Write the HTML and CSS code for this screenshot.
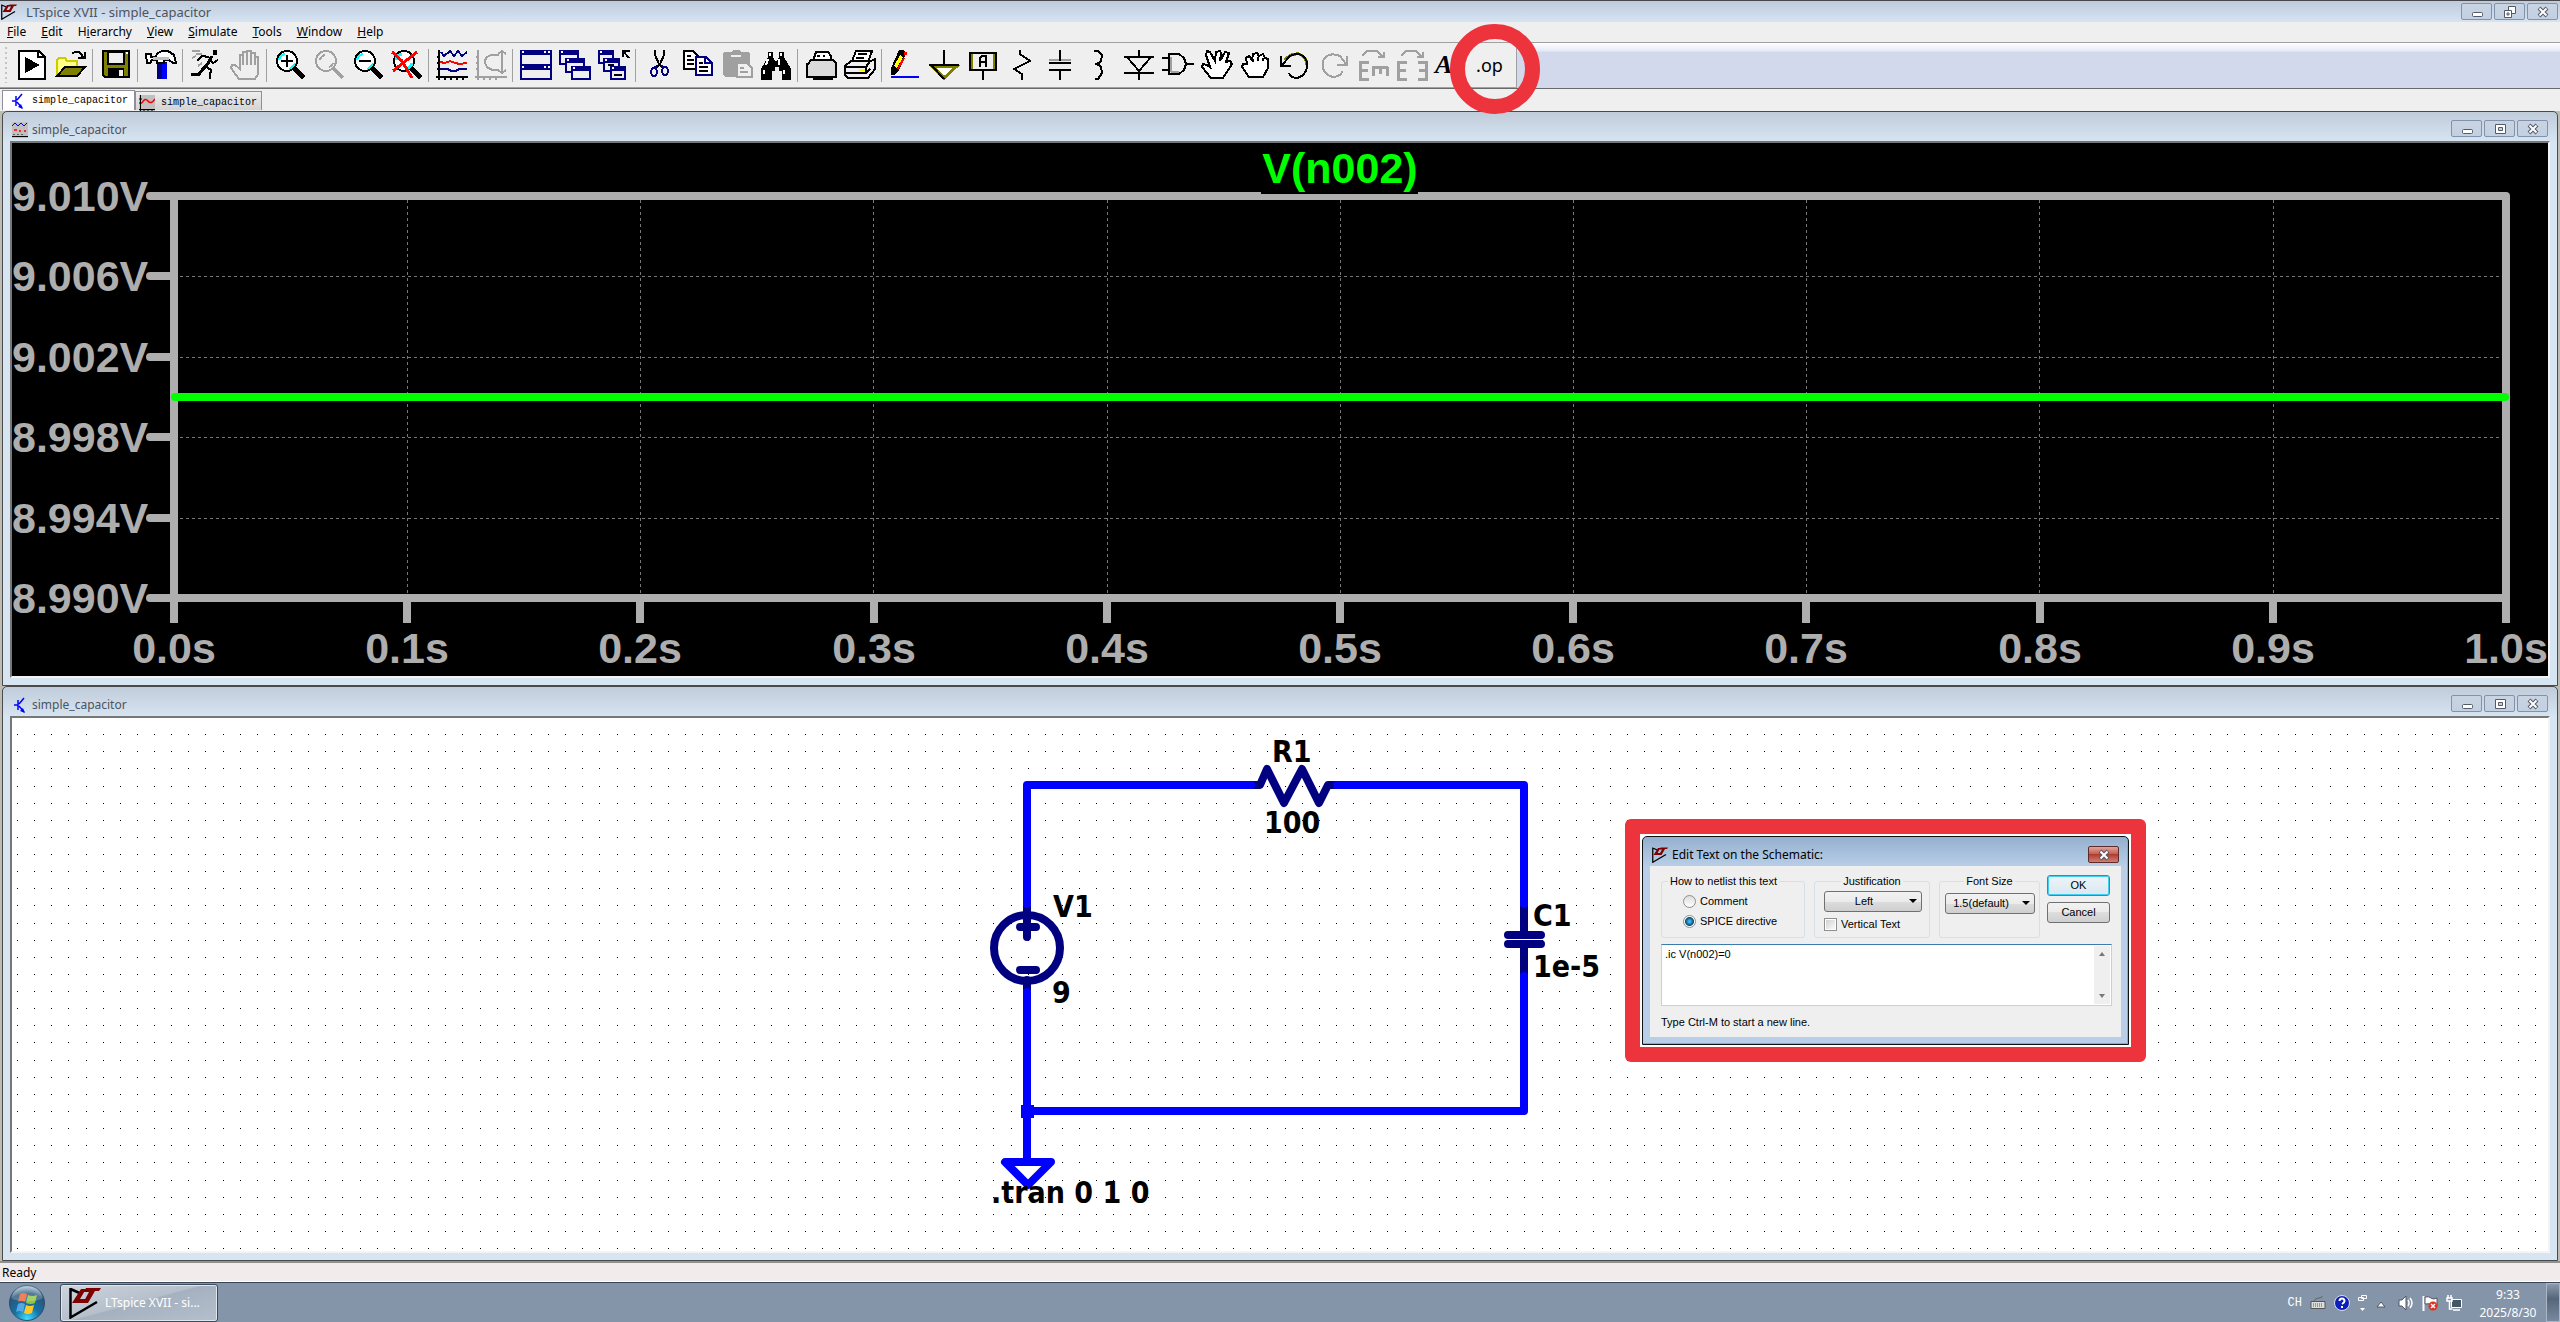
FILE: index.html
```html
<!DOCTYPE html>
<html lang="en">
<head>
<meta charset="utf-8">
<title>LTspice XVII - simple_capacitor</title>
<link rel="stylesheet" href="styles.css">
</head>
<body>
<svg class="defs" aria-hidden="true">
  <symbol id="logo" viewBox="0 0 32 32">
    <path d="M1.500 1v29.500L28 15M1.500 2l9 4" fill="none" stroke="#000" stroke-width="2.500"/>
    <path d="M12 2h5l-6 10h8l-2 4H3zM17 1h15l-2 3h-4l-7 12h-5l6-11h-5z" fill="#800000"/>
  </symbol>
  <symbol id="transistor" viewBox="0 0 16 16">
    <path d="M2 8h4M6 3v10M7 7l5-6M7 9l5 6" fill="none" stroke="#00f" stroke-width="1.500"/>
    <path d="M13 16l-5-2 3-3z" fill="#00f"/>
  </symbol>
  <symbol id="wave" viewBox="0 0 16 16">
    <path fill="#c0c0c0" d="M0 0h16v16H0z"/>
    <path d="M0 4l3-3 3 3 3-3 3 3 3-3" fill="none" stroke="#00f"/>
    <path d="M2 8h3M7 9h2M12 9h2" stroke="#f00" stroke-width="1.500"/>
    <path d="M0 14.500h16M2 12v1M6 12v1M10 12v1" stroke="#000"/>
  </symbol>
  <symbol id="min" viewBox="0 0 12 12"><rect x="1.500" y="6.500" width="10" height="4" rx="1" fill="#fff" stroke="#555a68"/></symbol>
  <symbol id="max" viewBox="0 0 12 12"><path d="M1.500 1.500h10v9h-10zM4.500 4.500h4v3h-4z" fill="#fff" stroke="#555a68" fill-rule="evenodd"/></symbol>
  <symbol id="restore" viewBox="0 0 12 12"><path d="M4.500.500h7v7h-7z" fill="#fff" stroke="#555a68"/><path d="M.500 4.500h7v7h-7zM3 7h2v2H3z" fill="#fff" stroke="#555a68"/></symbol>
  <symbol id="close" viewBox="0 0 12 12"><path d="M2 2l8 8M10 2l-8 8" stroke="#555a68" stroke-width="4"/><path d="M2.500 2.500l7 7M9.500 2.500l-7 7" stroke="#fff" stroke-width="2"/></symbol>
</svg>

<header class="titlebar">
  <svg class="icon16"><use href="#logo"/></svg>
  <h1>LTspice XVII - simple_capacitor</h1>
  <div class="controls">
    <button aria-label="Minimize"><svg><use href="#min"/></svg></button>
    <button aria-label="Restore"><svg><use href="#restore"/></svg></button>
    <button aria-label="Close"><svg><use href="#close"/></svg></button>
  </div>
</header>

<nav class="menu">
  <button><u>F</u>ile</button><button><u>E</u>dit</button><button>H<u>i</u>erarchy</button><button><u>V</u>iew</button><button><u>S</u>imulate</button><button><u>T</u>ools</button><button><u>W</u>indow</button><button><u>H</u>elp</button>
</nav>

<div class="toolbar">
  <div class="tools">
    <span class="grip"></span>
    <button aria-label="Run file"><svg viewBox="0 0 32 32"><path d="M3 2h20l6 6v22H3z" fill="#fff" stroke="#000" stroke-width="2"/><path d="M22 2v6h6" fill="none" stroke="#000" stroke-width="2"/><path d="M9 8l15 8-15 8z"/></svg></button>
    <button aria-label="Open"><svg viewBox="0 0 32 32"><path d="M2 26V11l2-2h6l2 3h10v6" fill="#ff8" stroke="#cc0" stroke-width="2"/><path d="M2 27l8-9h20l-8 9z" fill="#808000" stroke="#000" stroke-width="2"/><path d="M17 5q5-5 9 0l2 3M30 3v6h-7" fill="none" stroke="#000" stroke-width="2"/></svg></button>
    <i class="sep"></i>
    <button aria-label="Save"><svg viewBox="0 0 32 32"><path d="M3 2h26v26H5l-2-2z" fill="#808000" stroke="#000" stroke-width="2"/><path d="M8 3h16v12H8z" fill="#efefef" stroke="#000" stroke-width="2"/><path d="M8 19h16v10H8z"/><path d="M19 21h4v6h-4z" fill="#efefef"/><path d="M26 3h2v2h-2z" fill="#fff"/></svg></button>
    <i class="sep"></i>
    <button aria-label="Control panel"><svg viewBox="0 0 32 32"><path d="M12 13h10v17H12z" fill="#000080"/><path d="M17 14h5v16h-5z" fill="#00f"/><path d="M1 5h5v3h4l3-4 4-2h6l6 4 2 8h-3l-4-3h-5v3h-7v-3H7l-2 3H2z" fill="#fff" stroke="#000" stroke-width="2"/><path d="M8 9h16" stroke="#c0c0c0" stroke-width="3"/></svg></button>
    <i class="sep"></i>
    <button aria-label="Run"><svg viewBox="0 0 32 32"><path d="M23 1h4v5h-4z"/><path d="M22 7l-5 9-4 4-4 5H1" fill="none" stroke="#000" stroke-width="3"/><path d="M19 8l-7-1-5 5M20 10l3 4 5-3M15 17l6 4-1 5v4" fill="none" stroke="#000" stroke-width="2"/><path d="M2 2h8M6 5h6M2 9l4-2M12 14l-4 3" stroke="#a0a0a0" stroke-width="2"/></svg></button>
    <button aria-label="Halt"><svg viewBox="0 0 32 32"><path d="M10 30l-8-11 1-3h3l5 4V6h3v10V3h4v13V2h4v14V4h4v12-8h3v17l-3 5z" fill="none" stroke="#a0a0a0" stroke-width="2"/></svg></button>
    <i class="sep"></i>
    <button aria-label="Zoom in"><svg viewBox="0 0 32 32"><path d="M21 20l9 9" stroke="#000" stroke-width="5"/><circle cx="13" cy="12" r="10" fill="#fff" stroke="#000" stroke-width="2"/><path d="M5 11q1-5 6-6M15 20q5-2 6-6" fill="none" stroke="#0ff" stroke-width="2"/><path d="M7 12h12M13 6v12" stroke="#000" stroke-width="2"/></svg></button>
    <button aria-label="Pan"><svg viewBox="0 0 32 32"><path d="M21 20l9 9" stroke="#a0a0a0" stroke-width="4"/><circle cx="13" cy="12" r="10" fill="none" stroke="#a0a0a0" stroke-width="2"/><path d="M7 11q1-4 5-5M16 18q3-1 4-4" fill="none" stroke="#a0a0a0" stroke-width="2"/></svg></button>
    <button aria-label="Zoom out"><svg viewBox="0 0 32 32"><path d="M21 20l9 9" stroke="#000" stroke-width="5"/><circle cx="13" cy="12" r="10" fill="#fff" stroke="#000" stroke-width="2"/><path d="M5 11q1-5 6-6M15 20q5-2 6-6" fill="none" stroke="#0ff" stroke-width="2"/><path d="M7 12h12" stroke="#000" stroke-width="2"/></svg></button>
    <button aria-label="Zoom full extents"><svg viewBox="0 0 32 32"><path d="M21 20l9 9" stroke="#000" stroke-width="5"/><circle cx="13" cy="12" r="10" fill="#fff" stroke="#000" stroke-width="2"/><path d="M5 11q1-5 6-6M15 20q5-2 6-6" fill="none" stroke="#0ff" stroke-width="3"/><path d="M1 3l10 9 10 17M26 3L12 14 2 22" fill="none" stroke="#f00" stroke-width="3"/></svg></button>
    <i class="sep"></i>
    <button aria-label="Autorange"><svg viewBox="0 0 32 32"><path d="M3 1v30M0 28h32M1 8h3M1 14h3M1 20h3M9 28v3M15 28v3M21 28v3M27 28v3" stroke="#000" stroke-width="2"/><path d="M5 3l3 4 6-5 4 5 4-5 4 5 5-4" fill="none" stroke="#000080" stroke-width="2"/><path d="M4 13l5 1 5-2 5 2 5 1 7-1" fill="none" stroke="#f00" stroke-width="2"/><path d="M4 20h8l3 2h5l3-2h8" fill="none" stroke="#000080" stroke-width="2"/></svg></button>
    <button aria-label="Setup plot"><svg viewBox="0 0 32 32"><path d="M3 1v30M0 28h32M1 8h3M1 14h3M1 20h3M9 28v3M15 28v3M21 28v3M27 3v20M23 5l4-3 4 3M23 21l4 3 4-3" fill="none" stroke="#a0a0a0" stroke-width="2"/><path d="M24 6q-13-2-14 7 1 9 14 8" fill="none" stroke="#a0a0a0" stroke-width="2"/></svg></button>
    <i class="sep"></i>
    <button aria-label="Tile windows"><svg viewBox="0 0 32 32"><path d="M1 2h30v28H1z" fill="#efefef" stroke="#000080" stroke-width="2"/><path d="M0 1h32v5H0zM0 15h32v6H0z" fill="#000080"/><path d="M2 3h2M24 3h2M28 3h2M2 18h2M24 18h2M28 18h2" stroke="#fff" stroke-width="2"/></svg></button>
    <button aria-label="Cascade windows"><svg viewBox="0 0 32 32"><g fill="#efefef" stroke="#000080" stroke-width="2"><path d="M1 2h18v13H1z"/><path d="M7 10h18v13H7z"/><path d="M13 18h18v12H13z"/></g><path d="M0 1h20v5H0zM6 9h20v5H6zM12 17h20v5H12z" fill="#000080"/><path d="M2 3h2M8 11h2M14 19h2" stroke="#fff" stroke-width="2"/></svg></button>
    <button aria-label="Close windows"><svg viewBox="0 0 32 32"><g fill="#efefef" stroke="#000080" stroke-width="2"><path d="M1 2h14v12H1z"/><path d="M6 10h15v12H6z"/><path d="M13 18h14v12H13z"/></g><path d="M0 1h16v5H0zM5 9h17v5H5zM12 17h16v5H12z" fill="#000080"/><path d="M2 3h2M7 11h2M14 19h2" stroke="#fff" stroke-width="2"/><path d="M10 16h6M16 26h8M25 8V2h7M25 2l6 7" fill="none" stroke="#000" stroke-width="2"/></svg></button>
    <i class="sep"></i>
    <button aria-label="Cut"><svg viewBox="0 0 32 32"><path d="M12 1v5l4 9 4 4M21 1v5l-4 9-4 4" fill="none" stroke="#000" stroke-width="2"/><path d="M14 17l-3 2M18 17l4 1" stroke="#000080" stroke-width="2"/><ellipse cx="11" cy="23" rx="3" ry="4" fill="none" stroke="#000080" stroke-width="2"/><ellipse cx="22" cy="22" rx="3" ry="4" fill="none" stroke="#000080" stroke-width="2"/></svg></button>
    <button aria-label="Copy"><svg viewBox="0 0 32 32"><path d="M2 2h9l5 5v13H2z" fill="#fff" stroke="#000" stroke-width="2"/><path d="M5 7h4M5 11h7M5 15h7" stroke="#000" stroke-width="2"/><path d="M14 8h10l6 6v12H14z" fill="#fff" stroke="#000080" stroke-width="2"/><path d="M23 8v6h6" fill="none" stroke="#000080" stroke-width="2"/><path d="M17 14h4M17 18h9M17 22h9" stroke="#000" stroke-width="2"/></svg></button>
    <button aria-label="Paste"><svg viewBox="0 0 32 32"><path d="M3 3h7l2-2h6l2 2h7l2 2v13H18v10H4l-2-2V5z" fill="#a0a0a0"/><path d="M10 7h10" stroke="#efefef" stroke-width="2"/><path d="M16 14h10l5 5v9H16z" fill="#efefef" stroke="#a0a0a0" stroke-width="2"/><path d="M19 19h4M19 23h8" stroke="#a0a0a0" stroke-width="2"/></svg></button>
    <button aria-label="Find"><svg viewBox="0 0 32 32"><path d="M8 3h5v5l2 4h2l2-4V3h5v5l7 12v11h-9V22h-3v-4h-4v4h-3v9H1V20L8 8z"/><path d="M10 4v3M21 4v3M8 10l-2 6M19 10v6M4 21v4M24 21v4" stroke="#fff" stroke-width="2"/></svg></button>
    <i class="sep"></i>
    <button aria-label="Print preview"><svg viewBox="0 0 32 32"><path d="M8 12l3-9h12l3 4v5" fill="#fff" stroke="#000" stroke-width="2"/><path d="M3 15l3-4h22l3 3v14H2V15z" fill="#dadada" stroke="#000" stroke-width="2"/><path d="M8 28h20v3H8z"/><path d="M6 11h20M12 7h3M18 7h2" stroke="#000" stroke-width="2"/></svg></button>
    <button aria-label="Print"><svg viewBox="0 0 32 32"><path d="M8 12l4-10h16l-4 11" fill="#fff" stroke="#000" stroke-width="2"/><path d="M14 5h9M12 9h8" stroke="#000" stroke-width="2"/><path d="M1 17l6-5h20l4-2v10l-7 9H4l-3-3z" fill="#efefef" stroke="#000" stroke-width="2"/><path d="M1 18h21v7M2 24h20l4-4M26 12l-4 6" fill="none" stroke="#000" stroke-width="2"/><path d="M15 21h6" stroke="#ff0" stroke-width="2"/></svg></button>
    <i class="sep"></i>
    <button aria-label="Wire"><svg viewBox="0 0 32 32"><path d="M10 1h5l2 4-7 16-5 5H2v-7z"/><path d="M11 6l3 2-6 11-3-2z" fill="#ff0"/><path d="M15 9L9 20" stroke="#f00" stroke-width="2"/><path d="M15 3h3v3h-3z" fill="#f00"/><path d="M2 28h28" stroke="#00f" stroke-width="2"/></svg></button>
    <button aria-label="Ground"><svg viewBox="0 0 32 32"><path d="M16 1v14" stroke="#000" stroke-width="2"/><path d="M4 17h25L16 29z" fill="#fff" stroke="#808000" stroke-width="3"/><path d="M1 16h30M4 17l12 13" stroke="#000" stroke-width="2"/></svg></button>
    <button aria-label="Label net"><svg viewBox="0 0 32 32"><path d="M3 4h26v17H3z" fill="#efefef" stroke="#000" stroke-width="2"/><path d="M5 5v15M27 5v15" stroke="#808000" stroke-width="2"/><path d="M16 21v10M13 18V9l2-2h4v11M13 13h6" fill="none" stroke="#000" stroke-width="2"/></svg></button>
    <button aria-label="Resistor"><svg viewBox="0 0 32 32"><path d="M14 1v4l10 7L8 20l8 5v6" fill="none" stroke="#000" stroke-width="2"/></svg></button>
    <button aria-label="Capacitor"><svg viewBox="0 0 32 32"><path d="M4 11h22" stroke="#a0a0a0" stroke-width="2"/><path d="M15 1v11M4 14h22M4 21h22M15 21v10" stroke="#000" stroke-width="2"/></svg></button>
    <button aria-label="Inductor"><svg viewBox="0 0 32 32"><path d="M10 2h4l4 4-1 6-4 3 4 3 1 6-4 6h-3M11 15h5" fill="none" stroke="#000" stroke-width="2"/></svg></button>
    <button aria-label="Diode"><svg viewBox="0 0 32 32"><path d="M16 1v6M16 21v10M1 24h30" stroke="#000" stroke-width="2"/><path d="M4 8h24L16 22z" fill="#efefef" stroke="#000" stroke-width="2"/><path d="M1 8h30" stroke="#000" stroke-width="2"/></svg></button>
    <button aria-label="Component"><svg viewBox="0 0 32 32"><path d="M7 5h10l5 4 2 6-2 6-5 4H7z" fill="#efefef" stroke="#000" stroke-width="2"/><path d="M9 23h8M9 23V8" fill="none" stroke="#a0a0a0" stroke-width="2"/><path d="M0 9h7M0 21h7M24 15h8" stroke="#000" stroke-width="2"/></svg></button>
    <button aria-label="Move"><svg viewBox="0 0 32 32"><path d="M10 29l-9-11 1-3 4 1 3 2-4-12 1-4 3 1 5 9 1-9 4-1 1 2-1 8 5-9 4 1-3 9 4-1 2 3-9 14z" fill="#fff" stroke="#000" stroke-width="2"/></svg></button>
    <button aria-label="Drag"><svg viewBox="0 0 32 32"><path d="M9 28l-7-10 1-3h4l-1-6 3-2 3 4 1-6 4-1 2 3 4-2 2 4 3 1v9l-5 9z" fill="#fff" stroke="#000" stroke-width="2"/><path d="M13 10v3M18 8v4M23 9v3" stroke="#000" stroke-width="2"/></svg></button>
    <button aria-label="Undo"><svg viewBox="0 0 32 32"><path d="M6 11q6-7 14-6 8 3 8 11" fill="none" stroke="#808000" stroke-width="3"/><path d="M2 7v10h10M3 16l8-9q12-6 17 6 1 13-10 16-6 0-8-5" fill="none" stroke="#000" stroke-width="2"/></svg></button>
    <button aria-label="Redo"><svg viewBox="0 0 32 32"><path d="M29 7v9H19M28 15l-6-8Q10 2 5 12 3 25 15 28q9-1 9-6" fill="none" stroke="#a0a0a0" stroke-width="2"/></svg></button>
    <button aria-label="Rotate"><svg viewBox="0 0 32 32"><path d="M12 13H3v17h9M3 21h8M15 18h16M16 18v9M23 18v7M30 18v9" fill="none" stroke="#a0a0a0" stroke-width="3"/><path d="M5 7l5-5h10l6 6M27 3v5h-6" fill="none" stroke="#a0a0a0" stroke-width="2"/></svg></button>
    <button aria-label="Mirror"><svg viewBox="0 0 32 32"><path d="M11 13H2v17h9M2 21h8M22 13h8v17h-8M30 21h-7" fill="none" stroke="#a0a0a0" stroke-width="3"/><path d="M5 7l5-5h10l6 6M27 3v5h-6" fill="none" stroke="#a0a0a0" stroke-width="2"/></svg></button>
    <button class="glyph-a">A</button>
    <button class="glyph-op">.op</button>
    <span class="marker"></span>
  </div>
</div>

<div class="tabs">
  <button class="tab active"><svg class="icon16"><use href="#transistor"/></svg>simple_capacitor</button><button class="tab"><svg class="icon16" viewBox="0 0 16 16"><path fill="#c0c0c0" d="M0 0h16v16H0z"/><path d="M3 8q3-6 6-2t7-2" fill="none" stroke="#f00" stroke-width="1.500"/><path d="M1.500 0v16M0 14.500h16M0 4h3M0 8h3M5 14v2M9 14v2M13 14v2" stroke="#000"/></svg>simple_capacitor</button>
</div>

<main class="mdi">
  <section class="child">
    <div class="caption">
      <svg class="icon16"><use href="#wave"/></svg>
      <h2>simple_capacitor</h2>
      <div class="controls">
        <button aria-label="Minimize"><svg><use href="#min"/></svg></button>
        <button aria-label="Maximize"><svg><use href="#max"/></svg></button>
        <button aria-label="Close"><svg><use href="#close"/></svg></button>
      </div>
    </div>
    <div class="view plot">
      <svg viewBox="12 143 2536 533">
        <path class="plot-grid" d="M180 276.500H2502M180 357.500H2502M180 437.500H2502M180 518.500H2502M407.500 200V594M640.500 200V594M873.500 200V594M1107.500 200V594M1340.500 200V594M1573.500 200V594M1806.500 200V594M2039.500 200V594M2273.500 200V594"/>
        <path class="plot-axis" d="M150 196H2506M150 276h24M150 357h24M150 437h24M150 518h24M150 598H2506" stroke-linecap="round"/>
        <path class="plot-axis" d="M174 196V623M407 598v25M640 598v25M874 598v25M1107 598v25M1340 598v25M1573 598v25M1806 598v25M2040 598v25M2273 598v25M2506 196V623"/>
        <path class="trace" d="M175 397H2505"/>
        <rect x="1261" y="146" width="157" height="48"/>
        <g class="axis-y">
          <text x="12" y="211">9.010V</text><text x="12" y="291">9.006V</text><text x="12" y="372">9.002V</text><text x="12" y="452">8.998V</text><text x="12" y="533">8.994V</text><text x="12" y="613">8.990V</text>
        </g>
        <g class="axis-x">
          <text x="174" y="663">0.0s</text><text x="407" y="663">0.1s</text><text x="640" y="663">0.2s</text><text x="874" y="663">0.3s</text><text x="1107" y="663">0.4s</text><text x="1340" y="663">0.5s</text><text x="1573" y="663">0.6s</text><text x="1806" y="663">0.7s</text><text x="2040" y="663">0.8s</text><text x="2273" y="663">0.9s</text><text x="2506" y="663">1.0s</text>
        </g>
        <text class="trace-name" x="1340" y="183">V(n002)</text>
      </svg>
    </div>
  </section>

  <section class="child">
    <div class="caption">
      <svg class="icon16"><use href="#transistor"/></svg>
      <h2>simple_capacitor</h2>
      <div class="controls">
        <button aria-label="Minimize"><svg><use href="#min"/></svg></button>
        <button aria-label="Maximize"><svg><use href="#max"/></svg></button>
        <button aria-label="Close"><svg><use href="#close"/></svg></button>
      </div>
    </div>
    <div class="view schematic">
      <svg viewBox="12 718 2536 533">
        <path id="dots" class="dots"/>
        <path class="part" d="M1250 785h10l7-16 17 34 18-34 17 34 9-18h8M1027 906v31M1020 927h16M1020 970h16M1027 980v10M1524 906v29M1508 935h33M1508 944h33M1524 944v30"/>
        <circle class="part" cx="1027" cy="948" r="33"/>
        <path class="wire" d="M1027 904V785H1251M1337 785H1524V904M1524 976V1111H1027V992M1027 1111v51M1005 1162h46l-23 23z"/>
        <path fill="#00f" d="M1021 1105h13v13h-13z"/>
        <g class="net-text">
          <text x="1272" y="762">R1</text><text x="1264" y="833">100</text><text x="1053" y="917">V1</text><text x="1052" y="1003">9</text><text x="1533" y="926">C1</text><text x="1533" y="977">1e-5</text><text x="991" y="1203">.tran 0 1 0</text>
        </g>
      </svg>
      <div class="highlight">
        <form class="dialog">
          <div class="dialog-title">
            <svg class="icon16"><use href="#logo"/></svg>
            <h3>Edit Text on the Schematic:</h3>
            <button type="button" class="dialog-close" aria-label="Close"><svg><use href="#close"/></svg></button>
          </div>
          <div class="dialog-body">
            <div class="options">
              <fieldset class="netlist">
                <legend>How to netlist this text</legend>
                <label><input type="radio" name="kind">Comment</label>
                <label><input type="radio" name="kind" checked>SPICE directive</label>
              </fieldset>
              <fieldset class="justify">
                <legend>Justification</legend>
                <span class="drop"><select aria-label="Justification"><option>Left</option></select></span>
                <label><input type="checkbox">Vertical Text</label>
              </fieldset>
              <fieldset class="size">
                <legend>Font Size</legend>
                <span class="drop"><select aria-label="Font size"><option>1.5(default)</option></select></span>
              </fieldset>
              <div class="actions">
                <button type="button" class="ok">OK</button>
                <button type="button">Cancel</button>
              </div>
            </div>
            <div class="editor">
              <textarea aria-label="Text">.ic V(n002)=0</textarea>
              <span class="scroll"><i class="up"></i><i class="down"></i></span>
            </div>
            <p>Type Ctrl-M to start a new line.</p>
          </div>
        </form>
      </div>
    </div>
  </section>
</main>

<div class="status">Ready</div>

<footer class="taskbar">
  <button class="start" aria-label="Start"><svg viewBox="0 0 36 36">
    <defs><radialGradient id="orb" cx=".5" cy=".95" r=".9"><stop offset="0" stop-color="#3fe0ff"/><stop offset=".4" stop-color="#1473a8"/><stop offset=".8" stop-color="#2b5578"/><stop offset="1" stop-color="#9db9cc"/></radialGradient></defs>
    <circle cx="18" cy="18" r="17.500" fill="url(#orb)" stroke="#28506f"/>
    <path d="M11 9q3-2 7 0l-2 8q-4-2-7 0z" fill="#ee6030"/><path d="M19 10q4 2 9 0l-2 8q-4 2-9 0z" fill="#8cc63f"/><path d="M9 19q3-2 7 0l-2 8q-4-2-7 0z" fill="#52a8e8"/><path d="M17 20q4 2 8 0l-2 8q-4 2-8 0z" fill="#fcc828"/>
    <path d="M3 14a15 14 0 0 1 30 0q-15 5-30 0z" fill="#fff" opacity=".2"/>
  </svg></button>
  <button class="task"><svg><use href="#logo"/></svg>LTspice XVII - si...</button>
  <div class="tray">
    <span class="lang">CH</span>
    <svg viewBox="0 0 16 16"><path d="M1 6.500h14v7H1z" fill="#ddd" stroke="#555"/><path d="M3 9h10M3 11h10" stroke="#555" stroke-dasharray="1 1"/><path d="M4 6q1-3 5-3t3-2" fill="none" stroke="#666"/></svg>
    <svg viewBox="0 0 16 16"><circle cx="8" cy="8" r="7.500" fill="#0b1fb8" stroke="#dde"/><path d="M5.500 6q0-2.500 2.500-2.500T10.500 6q0 1.500-2.500 3M8 11v2" fill="none" stroke="#fff" stroke-width="2"/></svg>
    <svg class="langbar" viewBox="0 0 10 20"><path d="M3.500 2.500h5v3h-5zM.500 4.500h5v3h-5z" fill="#8494a9" stroke="#fff"/><path d="M2 15h5l-2.500 3z" fill="#fff"/></svg>
    <svg class="arrow" viewBox="0 0 10 12"><path d="M1 10l4-5 4 5z" fill="#fff" stroke="#556"/></svg>
    <svg viewBox="0 0 16 16"><path d="M1 5h3l4-4v14l-4-4H1z" fill="#fff" stroke="#556"/><path d="M10 5q2 3 0 6M12 3q4 5 0 10" fill="none" stroke="#fff" stroke-width="1.500"/></svg>
    <svg viewBox="0 0 16 16"><path d="M1.500 1v15" stroke="#fff" stroke-width="2"/><path d="M3 2q4-1 6 1t6 0v8q-5 1-6-1T3 9z" fill="#fff" stroke="#556"/><circle cx="11" cy="11" r="4.500" fill="#e03020"/><path d="M9 9l4 4M13 9l-4 4" stroke="#fff" stroke-width="1.500"/></svg>
    <svg viewBox="0 0 16 16"><path d="M5.500 4.500h10v8h-10z" fill="#445566" stroke="#fff"/><path d="M7 15h7M2 0v3M5 0v3M1 3h5v3H1zM3.500 6v8h3" fill="none" stroke="#fff" stroke-width="1.500"/></svg>
    <div class="clock"><time>9:33</time><time>2025/8/30</time></div>
    <button class="peek" aria-label="Show desktop"></button>
  </div>
</footer>
<script src="grid.js"></script>
</body>
</html>
```
FILE: styles.css
```css
* { box-sizing: border-box; }
body {
  margin: 0;
  min-height: 100vh;
  display: flex;
  flex-direction: column;
  background: #efefef;
  font: 12px/16px "Noto Sans", sans-serif;
  color: #000;
}
button { font: inherit; color: inherit; margin: 0; padding: 0; border: 0; background: none; }
h1, h2, h3, p { margin: 0; font-size: inherit; font-weight: normal; }
svg { display: block; flex: none; }
.defs { position: absolute; width: 0; height: 0; }
.icon16 { width: 16px; height: 16px; }

/* main window frame */
.titlebar {
  height: 22px;
  display: flex;
  align-items: center;
  gap: 9px;
  padding: 0 2px 0 1px;
  border-top: 1px solid #47484d;
  background: linear-gradient(#bfcbda, #d5e3f2);
  color: #4c545d;
}
.titlebar h1 { font-size: 13px; }
.controls { display: flex; gap: 2px; margin-left: auto; }
.controls button {
  width: 31px;
  height: 17px;
  display: grid;
  place-items: center;
  border: 1px solid #8192ac;
  border-radius: 2px;
  background: linear-gradient(#c8d4e2, #c3d0e1);
}
.controls svg, .dialog-close svg { width: 12px; height: 12px; }

.menu {
  height: 21px;
  display: flex;
  gap: 15px;
  padding-left: 7px;
  border-bottom: 1px solid #a0a0a0;
}

.toolbar {
  height: 46px;
  border-bottom: 1px solid #696969;
  background: linear-gradient(#fff, #e6eaf5 8px, #d3d9ed 9px);
}
.tools {
  position: relative;
  width: max-content;
  height: 45px;
  display: flex;
  align-items: center;
  padding-right: 7px;
  border-right: 1px solid #a0a0a0;
  border-bottom: 1px solid #a0a0a0;
  background: #efefef;
}
.tools button { width: 39px; height: 40px; display: grid; place-items: center; }
.tools svg { width: 32px; height: 32px; shape-rendering: crispEdges; }
.grip {
  width: 2px;
  height: 36px;
  margin: 0 5px;
  background: repeating-linear-gradient(#c4c4c4 0 2px, transparent 2px 5px);
}
.sep { width: 6px; height: 33px; background: linear-gradient(90deg, transparent 2px, #a0a0a0 2px 3px, transparent 3px); }
.tools .glyph-a { padding-left: 4px; justify-items: start; font: italic bold 26px/32px "Liberation Serif", serif; }
.tools .glyph-op { font: 18px/30px "Noto Sans", sans-serif; }
.marker {
  position: absolute;
  right: -24px;
  top: -19px;
  width: 90px;
  height: 90px;
  border: 15px solid #ed333b;
  border-radius: 50%;
}

.tabs { height: 22px; display: flex; align-items: flex-start; padding: 1px 2px; }
.tab {
  height: 19px;
  margin-top: 1px;
  padding: 3px 4px 0 3px;
  display: flex;
  align-items: center;
  gap: 6px;
  border: 1px solid #8e8f9a;
  border-bottom: 0;
  background: linear-gradient(#eee, #d4d4d4);
  font: 10px/16px "Liberation Mono", monospace;
}
.tab.active { height: 20px; margin-top: 0; padding: 1px 6px 0 7px; background: #fff; }

/* child windows */
.mdi { flex: 1; display: flex; flex-direction: column; padding: 0 2px; background: #bcbcb4; }
.child {
  flex: 1 1 0;
  display: flex;
  flex-direction: column;
  padding: 0 7px 7px;
  border: 1px solid #4a4a4a;
  border-radius: 5px 5px 0 0;
  background: linear-gradient(#c0ccda, #d7e4f2 30px);
}
.caption { height: 29px; display: flex; align-items: center; gap: 4px; padding: 7px 2px 0; color: #4c545d; }
.caption .controls { margin-top: -3px; }
.view {
  flex: 1;
  position: relative;
  border: 2px solid #e8ecf0;
  border-color: #777 #f4f4f4 #f4f4f4 #777;
}
.view > svg { width: 100%; height: auto; }
.plot { background: #000; }
.schematic { background: #fff; }

.plot text { font: bold 43px "Liberation Sans", sans-serif; fill: #aeaeae; }
.axis-x text, .plot .trace-name { text-anchor: middle; }
.plot .trace-name { fill: #0f0; }
.plot-axis { fill: none; stroke: #aeaeae; stroke-width: 8; }
.plot-grid { fill: none; stroke: #777; stroke-dasharray: 3 3; }
.trace { stroke: #0f0; stroke-width: 8; stroke-linecap: round; }

.dots { stroke: #000; shape-rendering: crispEdges; }
.wire, .part { fill: none; stroke-width: 8; stroke-linecap: round; stroke-linejoin: round; }
.wire { stroke: #00f; }
.part { stroke: #000080; }
.net-text { font: bold 30px "DejaVu Sans Condensed", "Noto Sans", sans-serif; }

/* text dialog, floating on the schematic */
.highlight {
  position: absolute;
  left: 1613px;
  top: 101px;
  width: 521px;
  border: 15px solid #ed333b;
  border-radius: 6px;
  background: #fff;
  padding: 2px;
}
.dialog {
  padding: 0 7px 7px;
  border: 1px solid #111;
  border-radius: 5px 5px 0 0;
  background: linear-gradient(#94b0ce, #b9cfe9 30px);
  box-shadow: inset -1px -1px #4cc4e0;
}
.dialog-title { height: 29px; display: flex; align-items: center; gap: 4px; padding: 6px 2px 0; }
.dialog-close {
  width: 31px;
  height: 17px;
  margin-left: auto;
  display: grid;
  place-items: center;
  border: 1px solid #5b2a2a;
  border-radius: 2px;
  background: linear-gradient(#e0a49c, #c4584c 50%, #b03c30 50%, #d08070);
}
.dialog-body {
  padding: 9px 9px 8px 11px;
  background: #efefef;
  font: 11px/13px "Liberation Sans", sans-serif;
}
.options { display: flex; align-items: flex-start; height: 69px; }
fieldset {
  height: 63px;
  margin: 0 9px 0 0;
  padding: 0;
  border: 1px solid #d5dfe5;
  border-radius: 3px;
  display: flex;
  flex-direction: column;
}
legend { padding: 0 2px; }
.justify legend, .size legend { margin: 0 auto; }
fieldset label { display: flex; align-items: center; gap: 4px; height: 20px; }
fieldset input { appearance: none; width: 13px; height: 13px; margin: 0; border: 1px solid #8e8f8f; background: #eee; }
fieldset input[type=radio] { border-radius: 50%; background: linear-gradient(#ddd, #fff); }
fieldset input[type=radio]:checked { background: radial-gradient(circle, #3cb4e8 1px, #0c4a78 4px, #fff 5px); }
fieldset input[type=checkbox] { background: linear-gradient(135deg, #ccc, #fff); box-shadow: inset 0 0 0 1px #fff; }
.netlist { width: 144px; padding-top: 3px; }
.netlist legend { margin-left: 6px; }
.netlist label { margin-left: 21px; }
.justify { width: 116px; }
.justify label { margin-left: 9px; height: 24px; }
.size { width: 101px; margin-right: 7px; }
.drop { position: relative; margin: 3px 7px 0 9px; }
.size .drop { margin: 5px 4px 0 5px; }
.drop::after {
  content: "";
  position: absolute;
  right: 5px;
  top: 8px;
  border: 4px solid transparent;
  border-top-color: #000;
  border-bottom: 0;
}
.drop select, .actions button {
  width: 100%;
  height: 21px;
  border: 1px solid #707070;
  border-radius: 3px;
  background: linear-gradient(#f2f2f2, #ebebeb 50%, #ddd 50%, #cfcfcf);
}
.drop select { display: block; appearance: none; margin: 0; padding: 0 18px 0 0; font: inherit; color: #000; text-align: center; text-align-last: center; }
.actions { width: 63px; display: flex; flex-direction: column; gap: 6px; }
.actions .ok { border-color: #2c8fb8; box-shadow: inset 0 0 0 1px #40d0f4; background: linear-gradient(#eef4f8, #d8e8f2); }
.editor { display: flex; height: 62px; border: 1px solid #b8d4e6; border-top-color: #3d7bad; background: #fff; padding: 1px; }
.editor textarea { flex: 1; margin: 0; padding: 2px; border: 0; resize: none; font: inherit; overflow: hidden; background: #fff; color: #000; }
.scroll { width: 16px; display: flex; flex-direction: column; justify-content: space-between; align-items: center; padding: 6px 0; background: #efefef; }
.scroll i { border: 3px solid transparent; }
.scroll .up { border-bottom: 4px solid #777; border-top: 0; }
.scroll .down { border-top: 4px solid #777; border-bottom: 0; }
.dialog-body p { margin: 10px 0 0; }

/* status bar and desktop taskbar */
.status {
  height: 21px;
  padding: 2px 2px 0;
  border-top: 2px solid #909090;
  border-bottom: 1px solid #fff;
  background: #f1eceb;
}
.taskbar {
  height: 40px;
  display: flex;
  align-items: center;
  border-top: 1px solid #35455a;
  background: #8494a9;
  color: #fff;
}
.start { width: 36px; margin: 0 15px 0 9px; }
.start svg { width: 36px; height: 36px; }
.task {
  width: 158px;
  height: 38px;
  display: flex;
  align-items: center;
  gap: 4px;
  padding-left: 8px;
  border: 1px solid #3d4a5c;
  border-radius: 3px;
  box-shadow: inset 0 0 0 1px #e0e6ee;
  background: linear-gradient(165deg, #cdd4dc, #b6c0cc 48%, #a5b1c0 50%, #b4bfcc);
}
.task svg { width: 32px; height: 32px; }
.tray { margin-left: auto; display: flex; align-items: center; gap: 8px; height: 100%; }
.tray svg { width: 16px; height: 16px; }
.tray .langbar { width: 10px; height: 20px; }
.tray .arrow { width: 10px; height: 12px; margin-right: 4px; }
.lang { font: 12px/16px "Liberation Mono", monospace; }
.clock { width: 76px; display: flex; flex-direction: column; padding-top: 2px; text-align: center; line-height: 18px; }
.tray .peek { width: 14px; height: 100%; margin-left: -8px; border: 1px solid #aab6c4; background: linear-gradient(#8a99ab, #56667a 40%, #7888a0); }
```
FILE: grid.js
```js
// Schematic grid: one-pixel dots on whole pixels, evenly pitched.
const pitch = 17.13;
let path = "";
for (let row = 0; row < 32; row++) {
  const y = Math.floor(717.5 + row * pitch);
  for (let col = 0; col < 148; col++) {
    const x = Math.floor(17.5 + col * pitch);
    path += `M${x} ${y + 0.5}h1`;
  }
}
document.getElementById("dots").setAttribute("d", path);
```
